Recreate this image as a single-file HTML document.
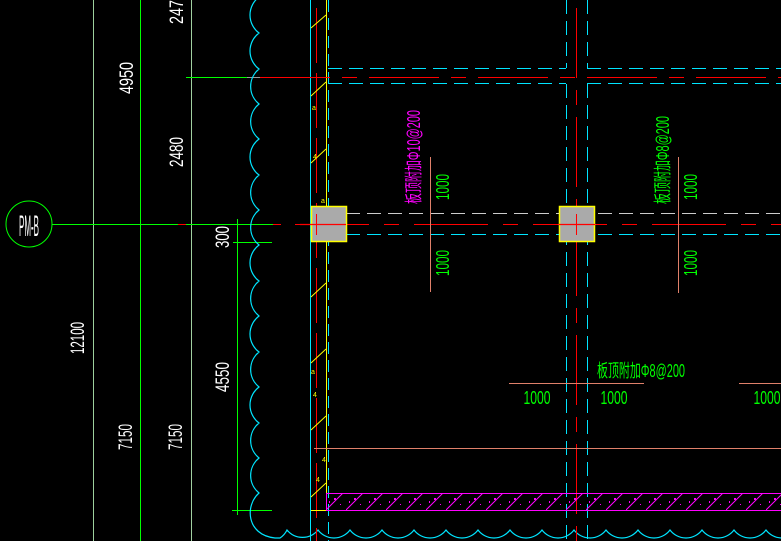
<!DOCTYPE html>
<html><head><meta charset="utf-8"><style>
html,body{margin:0;padding:0;background:#000;width:781px;height:541px;overflow:hidden}
svg{display:block}
text{font-family:"Liberation Sans","Noto Sans CJK SC",sans-serif}
</style></head><body>
<svg width="781" height="541" viewBox="0 0 781 541" xmlns="http://www.w3.org/2000/svg">
<defs>
<pattern id="h" width="20" height="17" patternUnits="userSpaceOnUse" x="326" y="493">
<line x1="0" y1="17" x2="17" y2="0" stroke="#f0f" stroke-width="1"/>
<rect x="8" y="5" width="2" height="2" fill="#f0f"/><rect x="14" y="11" width="1" height="1" fill="#f0f"/><rect x="3" y="8" width="1" height="2" fill="#f0f"/>
</pattern>
</defs>
<rect width="781" height="541" fill="#000"/>
<line x1="93.5" y1="0" x2="93.5" y2="541" stroke="#9ccf9c"/>
<line x1="140.5" y1="0" x2="140.5" y2="541" stroke="#00ff00"/>
<line x1="191.5" y1="0" x2="191.5" y2="541" stroke="#a0d0a0"/>
<line x1="237.5" y1="219" x2="237.5" y2="515" stroke="#00ff00"/>
<line x1="186" y1="77.5" x2="247" y2="77.5" stroke="#00ff00"/>
<line x1="247" y1="77.5" x2="330" y2="77.5" stroke="#999"/>
<line x1="52" y1="224.5" x2="178" y2="224.5" stroke="#00ff00"/>
<line x1="178" y1="224.5" x2="186" y2="224.5" stroke="#f00"/>
<line x1="186" y1="224.5" x2="273" y2="224.5" stroke="#00ff00"/>
<line x1="273" y1="224.5" x2="281" y2="224.5" stroke="#f00"/>
<line x1="233" y1="242.5" x2="272" y2="242.5" stroke="#00ff00"/>
<line x1="232" y1="510.5" x2="272" y2="510.5" stroke="#00ff00"/>
<circle cx="29" cy="224" r="23" fill="none" stroke="#00ff00"/>
<text x="29" y="236" fill="#fff" font-size="30" text-anchor="middle" textLength="20" lengthAdjust="spacingAndGlyphs">PM-B</text>
<g fill="#fff" font-size="19" text-anchor="middle">
<text transform="translate(133,78) rotate(-90)" textLength="32" lengthAdjust="spacingAndGlyphs">4950</text>
<text transform="translate(183,152) rotate(-90)" textLength="30" lengthAdjust="spacingAndGlyphs">2480</text>
<text transform="translate(183,8) rotate(-90)" textLength="32" lengthAdjust="spacingAndGlyphs">2470</text>
<text transform="translate(229,237) rotate(-90)" textLength="22" lengthAdjust="spacingAndGlyphs">300</text>
<text transform="translate(84,338) rotate(-90)" textLength="32" lengthAdjust="spacingAndGlyphs">12100</text>
<text transform="translate(132,437) rotate(-90)" textLength="26" lengthAdjust="spacingAndGlyphs">7150</text>
<text transform="translate(182,437) rotate(-90)" textLength="26" lengthAdjust="spacingAndGlyphs">7150</text>
<text transform="translate(229,377) rotate(-90)" textLength="30" lengthAdjust="spacingAndGlyphs">4550</text>
</g>
<path fill="none" stroke="#00e5ff" stroke-width="1.2" d="M259,-3 A22.5 22.5 0 0 0 259,33 A22.5 22.5 0 0 0 259,69 A22.5 22.5 0 0 0 259,104 A22.5 22.5 0 0 0 259,139 A22.5 22.5 0 0 0 259,175 A22.5 22.5 0 0 0 259,210 A22.5 22.5 0 0 0 259,245 A22.5 22.5 0 0 0 259,281 A22.5 22.5 0 0 0 259,316 A22.5 22.5 0 0 0 259,352 A22.5 22.5 0 0 0 259,387 A22.5 22.5 0 0 0 259,423 A22.5 22.5 0 0 0 259,458 A22.5 22.5 0 0 0 259,493 C245,505 246,535 275,538 L280,538 A20 20 0 0 0 287,530 A20 20 0 0 0 318,530 A20 20 0 0 0 350,530 A20 20 0 0 0 382,530 A20 20 0 0 0 414,530 A20 20 0 0 0 446,530 A20 20 0 0 0 478,530 A20 20 0 0 0 510,530 A20 20 0 0 0 542,530 A20 20 0 0 0 574,530 A20 20 0 0 0 606,530 A20 20 0 0 0 638,530 A20 20 0 0 0 670,530 A20 20 0 0 0 702,530 A20 20 0 0 0 734,530 A20 20 0 0 0 766,530 A20 20 0 0 0 798,530"/>
<line x1="310.5" y1="0" x2="310.5" y2="541" stroke="#00e5ff"/>
<line x1="326.5" y1="0" x2="326.5" y2="510" stroke="#ff0"/>
<line x1="316.5" y1="8" x2="316.5" y2="541" stroke="#f00" stroke-dasharray="55,10"/>
<line x1="328.5" y1="0" x2="328.5" y2="541" stroke="#00e5ff" stroke-dasharray="12,6"/>
<g stroke="#ff0" stroke-width="1">
<line x1="311" y1="28" x2="326" y2="15"/><line x1="311" y1="96" x2="326" y2="82"/><line x1="311" y1="163" x2="326" y2="149"/>
<line x1="311" y1="297" x2="326" y2="283"/><line x1="311" y1="363" x2="326" y2="349"/><line x1="311" y1="430" x2="326" y2="416"/><line x1="311" y1="497" x2="326" y2="483"/>
<line x1="311" y1="510.5" x2="326" y2="510.5"/>
</g>
<g fill="#ff0" font-size="7"><text x="312" y="110">a</text><text x="313" y="159">4</text><text x="321" y="203">a</text><text x="311" y="374">a</text><text x="313" y="397">4</text><text x="322" y="462">4</text><text x="316" y="482">4</text></g>
<line x1="328" y1="68.5" x2="566" y2="68.5" stroke="#00e5ff" stroke-dasharray="14,7"/>
<line x1="328" y1="83.5" x2="566" y2="83.5" stroke="#00e5ff" stroke-dasharray="14,7"/>
<line x1="587" y1="68.5" x2="781" y2="68.5" stroke="#00e5ff" stroke-dasharray="14,7"/>
<line x1="587" y1="83.5" x2="781" y2="83.5" stroke="#00e5ff" stroke-dasharray="14,7"/>
<line x1="260" y1="77.5" x2="781" y2="77.5" stroke="#f00" stroke-dasharray="70,12,15,12"/>
<line x1="566.5" y1="0" x2="566.5" y2="68" stroke="#00e5ff" stroke-dasharray="14,7"/>
<line x1="587.5" y1="0" x2="587.5" y2="68" stroke="#00e5ff" stroke-dasharray="14,7"/>
<line x1="566.5" y1="84" x2="566.5" y2="541" stroke="#00e5ff" stroke-dasharray="14,7"/>
<line x1="587.5" y1="84" x2="587.5" y2="541" stroke="#00e5ff" stroke-dasharray="14,7"/>
<line x1="576.5" y1="8" x2="576.5" y2="541" stroke="#f00" stroke-dasharray="70,12,15,12"/>
<line x1="346" y1="213.5" x2="781" y2="213.5" stroke="#ccc" stroke-dasharray="14,7"/>
<line x1="346" y1="234.5" x2="781" y2="234.5" stroke="#00e5ff" stroke-dasharray="14,7"/>
<line x1="295" y1="224.5" x2="781" y2="224.5" stroke="#f00" stroke-dasharray="74,15,15,15"/>
<rect x="311.5" y="206.5" width="35" height="35" fill="#aaa" stroke="#ff0" stroke-width="1.5"/>
<rect x="559.5" y="206.5" width="35" height="35" fill="#aaa" stroke="#ff0" stroke-width="1.5"/>
<line x1="300" y1="224.5" x2="346" y2="224.5" stroke="#f00" stroke-width="1.2"/>
<line x1="316.5" y1="214" x2="316.5" y2="235" stroke="#f00"/>
<line x1="559" y1="224.5" x2="595" y2="224.5" stroke="#f00" stroke-width="1.2"/>
<line x1="576.5" y1="214" x2="576.5" y2="235" stroke="#f00"/>
<g stroke="#e0806a">
<line x1="430.5" y1="157" x2="430.5" y2="292"/>
<line x1="678.5" y1="157" x2="678.5" y2="293"/>
<line x1="509" y1="383.5" x2="644" y2="383.5"/>
<line x1="739" y1="383.5" x2="781" y2="383.5"/>
<line x1="314" y1="448.5" x2="781" y2="448.5"/>
</g>
<text transform="translate(420,157) rotate(-90)" fill="#f0f" font-size="18" text-anchor="middle" textLength="94" lengthAdjust="spacingAndGlyphs">板顶附加Φ10@200</text>
<text transform="translate(669,160) rotate(-90)" fill="#00ff00" font-size="18" text-anchor="middle" textLength="88" lengthAdjust="spacingAndGlyphs">板顶附加Φ8@200</text>
<g fill="#00ff00" font-size="18" text-anchor="middle">
<text transform="translate(449,187) rotate(-90)" textLength="26" lengthAdjust="spacingAndGlyphs">1000</text>
<text transform="translate(449,263) rotate(-90)" textLength="26" lengthAdjust="spacingAndGlyphs">1000</text>
<text transform="translate(697,187) rotate(-90)" textLength="26" lengthAdjust="spacingAndGlyphs">1000</text>
<text transform="translate(697,263) rotate(-90)" textLength="26" lengthAdjust="spacingAndGlyphs">1000</text>
<text x="537" y="404" textLength="27" lengthAdjust="spacingAndGlyphs">1000</text>
<text x="614" y="404" textLength="27" lengthAdjust="spacingAndGlyphs">1000</text>
<text x="767" y="404" textLength="27" lengthAdjust="spacingAndGlyphs">1000</text>
<text x="641" y="377" textLength="88" lengthAdjust="spacingAndGlyphs">板顶附加Φ8@200</text>
</g>
<rect x="326.5" y="493.5" width="460" height="17" fill="url(#h)" stroke="#f0f"/>
</svg>
</body></html>
